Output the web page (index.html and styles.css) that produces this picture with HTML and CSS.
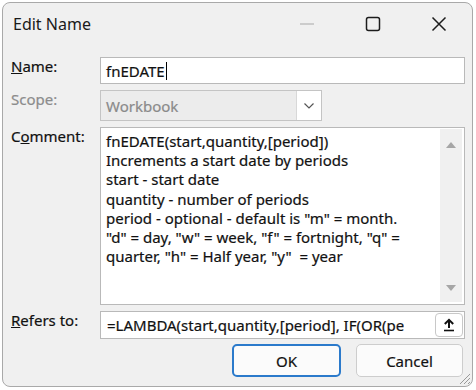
FILE: index.html
```html
<!DOCTYPE html>
<html lang="en">
<head>
    <meta charset="UTF-8">
    <title>Edit Name</title>
    <link rel="stylesheet" href="styles.css">
</head>
<body>
    <div class="window">
        <div class="titlebar">
            <span class="title">Edit Name</span>
            <div class="controls">
                <span class="ctl">
                    <svg width="16" height="16" viewBox="0 0 16 16"><line x1="1" y1="8" x2="15" y2="8" stroke="#b8b8b8" stroke-width="1.3"/></svg>
                </span>
                <span class="ctl">
                    <svg width="16" height="16" viewBox="0 0 16 16"><rect x="1.5" y="1.5" width="13" height="13" rx="2" fill="none" stroke="#1c1c1c" stroke-width="1.5"/></svg>
                </span>
                <span class="ctl">
                    <svg width="16" height="16" viewBox="0 0 16 16"><path d="M1.5 1.5 L14.5 14.5 M14.5 1.5 L1.5 14.5" stroke="#1c1c1c" stroke-width="1.5" fill="none"/></svg>
                </span>
            </div>
        </div>

        <div class="form">
            <label class="lbl"><u>N</u>ame:</label>
            <div class="field name-field">fnEDATE<span class="caret"></span></div>

            <label class="lbl disabled">Scope:</label>
            <div class="select">
                <span class="select-text">Workbook</span>
                <span class="drop">
                    <svg width="12" height="8" viewBox="0 0 12 8"><path d="M1.5 1.5 L6 6 L10.5 1.5" fill="none" stroke="#555" stroke-width="1.2"/></svg>
                </span>
            </div>

            <label class="lbl">C<u>o</u>mment:</label>
            <div class="memo">
                <div class="memo-text">fnEDATE(start,quantity,[period])
Increments a start date by periods
start - start date
quantity - number of periods
period - optional - default is "m" = month.
"d" = day, "w" = week, "f" = fortnight, "q" =
quarter, "h" = Half year, "y"  = year</div>
                <div class="scrollbar">
                    <svg width="12" height="8" viewBox="0 0 12 8"><path d="M1 7 L6 1 L11 7 Z" fill="#a6a6a6"/></svg>
                    <svg width="12" height="8" viewBox="0 0 12 8"><path d="M1 1 L6 7 L11 1 Z" fill="#a6a6a6"/></svg>
                </div>
            </div>

            <label class="lbl"><u>R</u>efers to:</label>
            <div class="field refers">
                <span class="ref-text">=LAMBDA(start,quantity,[period], IF(OR(pe</span>
                <span class="collapse">
                    <svg width="12" height="14" viewBox="0 0 12 14"><path d="M6 2 L6 10 M1.8 6 L6 1.8 L10.2 6" fill="none" stroke="#111" stroke-width="2"/><line x1="1" y1="12.5" x2="11" y2="12.5" stroke="#111" stroke-width="1.6"/></svg>
                </span>
            </div>
        </div>

        <div class="buttons">
            <button class="btn ok">OK</button>
            <button class="btn">Cancel</button>
        </div>

        <svg class="grip" width="14" height="14" viewBox="0 0 14 14">
            <path d="M13 3 L3 13 M13 7 L7 13 M13 11 L11 13" stroke="#9a9a9a" stroke-width="1"/>
        </svg>
    </div>
</body>
</html>
```

FILE: styles.css
```css
body {
    margin: 0;
    background: #ffffff;
    font-family: "Noto Sans", "Open Sans", sans-serif;
    font-size: 15px;
    color: #111111;
    -webkit-text-stroke: 0.2px;
}
.window {
    position: relative;
    box-sizing: border-box;
    margin: 2px 0 0 2px;
    width: 471px;
    height: 385px;
    background: #f0f0f0;
    border: 1px solid #a9a9a9;
    border-radius: 8px;
}
.titlebar {
    display: flex;
    align-items: center;
    justify-content: space-between;
    height: 42px;
    padding-left: 10px;
}
.title {
    font-size: 16px;
    color: #1a1a1a;
    -webkit-text-stroke: 0;
}
.controls {
    display: flex;
    height: 100%;
}
.ctl {
    display: flex;
    align-items: center;
    justify-content: center;
    width: 66px;
}
.form {
    display: grid;
    grid-template-columns: 89px 365px;
    grid-template-rows: 27px 31px 178px 28px;
    row-gap: 6px;
    padding: 12px 0 0 8px;
}
.lbl {
    line-height: 20px;
    margin-top: -1px;
}
.lbl.disabled {
    color: #8c8c8c;
}
.field {
    box-sizing: border-box;
    display: flex;
    align-items: center;
    background: #ffffff;
    border: 1px solid #b9b9b9;
    padding-left: 5px;
}
.caret {
    display: inline-block;
    width: 1px;
    height: 18px;
    background: #000;
    margin-left: 1px;
}
.select {
    box-sizing: border-box;
    display: flex;
    align-items: center;
    justify-content: space-between;
    width: 222px;
    background: #ececec;
    border: 1px solid #c4c4c4;
    padding-left: 5px;
}
.select-text {
    color: #8a8a8a;
}
.drop {
    display: flex;
    align-items: center;
    justify-content: center;
    width: 24px;
    height: 100%;
    background: #ffffff;
    border-left: 1px solid #d8d8d8;
}
.memo {
    box-sizing: border-box;
    display: flex;
    background: #ffffff;
    border: 1px solid #b9b9b9;
}
.memo-text {
    flex: 1;
    white-space: pre;
    line-height: 19.2px;
    padding: 4px 0 0 5px;
}
.scrollbar {
    display: flex;
    flex-direction: column;
    justify-content: space-between;
    align-items: center;
    width: 22px;
    margin: 1px 2px 2px 0;
    padding: 12px 0 10px;
    box-sizing: border-box;
    background: #f0f0f0;
}
.refers {
    justify-content: space-between;
    padding-left: 6px;
}
.ref-text {
    white-space: nowrap;
    overflow: hidden;
}
.collapse {
    box-sizing: border-box;
    display: flex;
    align-items: center;
    justify-content: center;
    width: 28px;
    height: 24px;
    margin-right: 1px;
    background: #ffffff;
    border: 1px solid #c8c8c8;
    border-radius: 4px;
}
.buttons {
    display: flex;
    justify-content: flex-end;
    gap: 15px;
    padding: 5px 9px 0 0;
}
.btn {
    box-sizing: border-box;
    height: 33px;
    width: 107px;
    font-family: inherit;
    font-size: 15px;
    color: #111111;
    background: #fbfbfb;
    border: 1px solid #cdcdcd;
    border-radius: 5px;
    -webkit-text-stroke: 0.2px;
}
.btn.ok {
    width: 109px;
    border: 2px solid #2b7acb;
}
.grip {
    position: absolute;
    right: 1px;
    bottom: 1px;
}
```
